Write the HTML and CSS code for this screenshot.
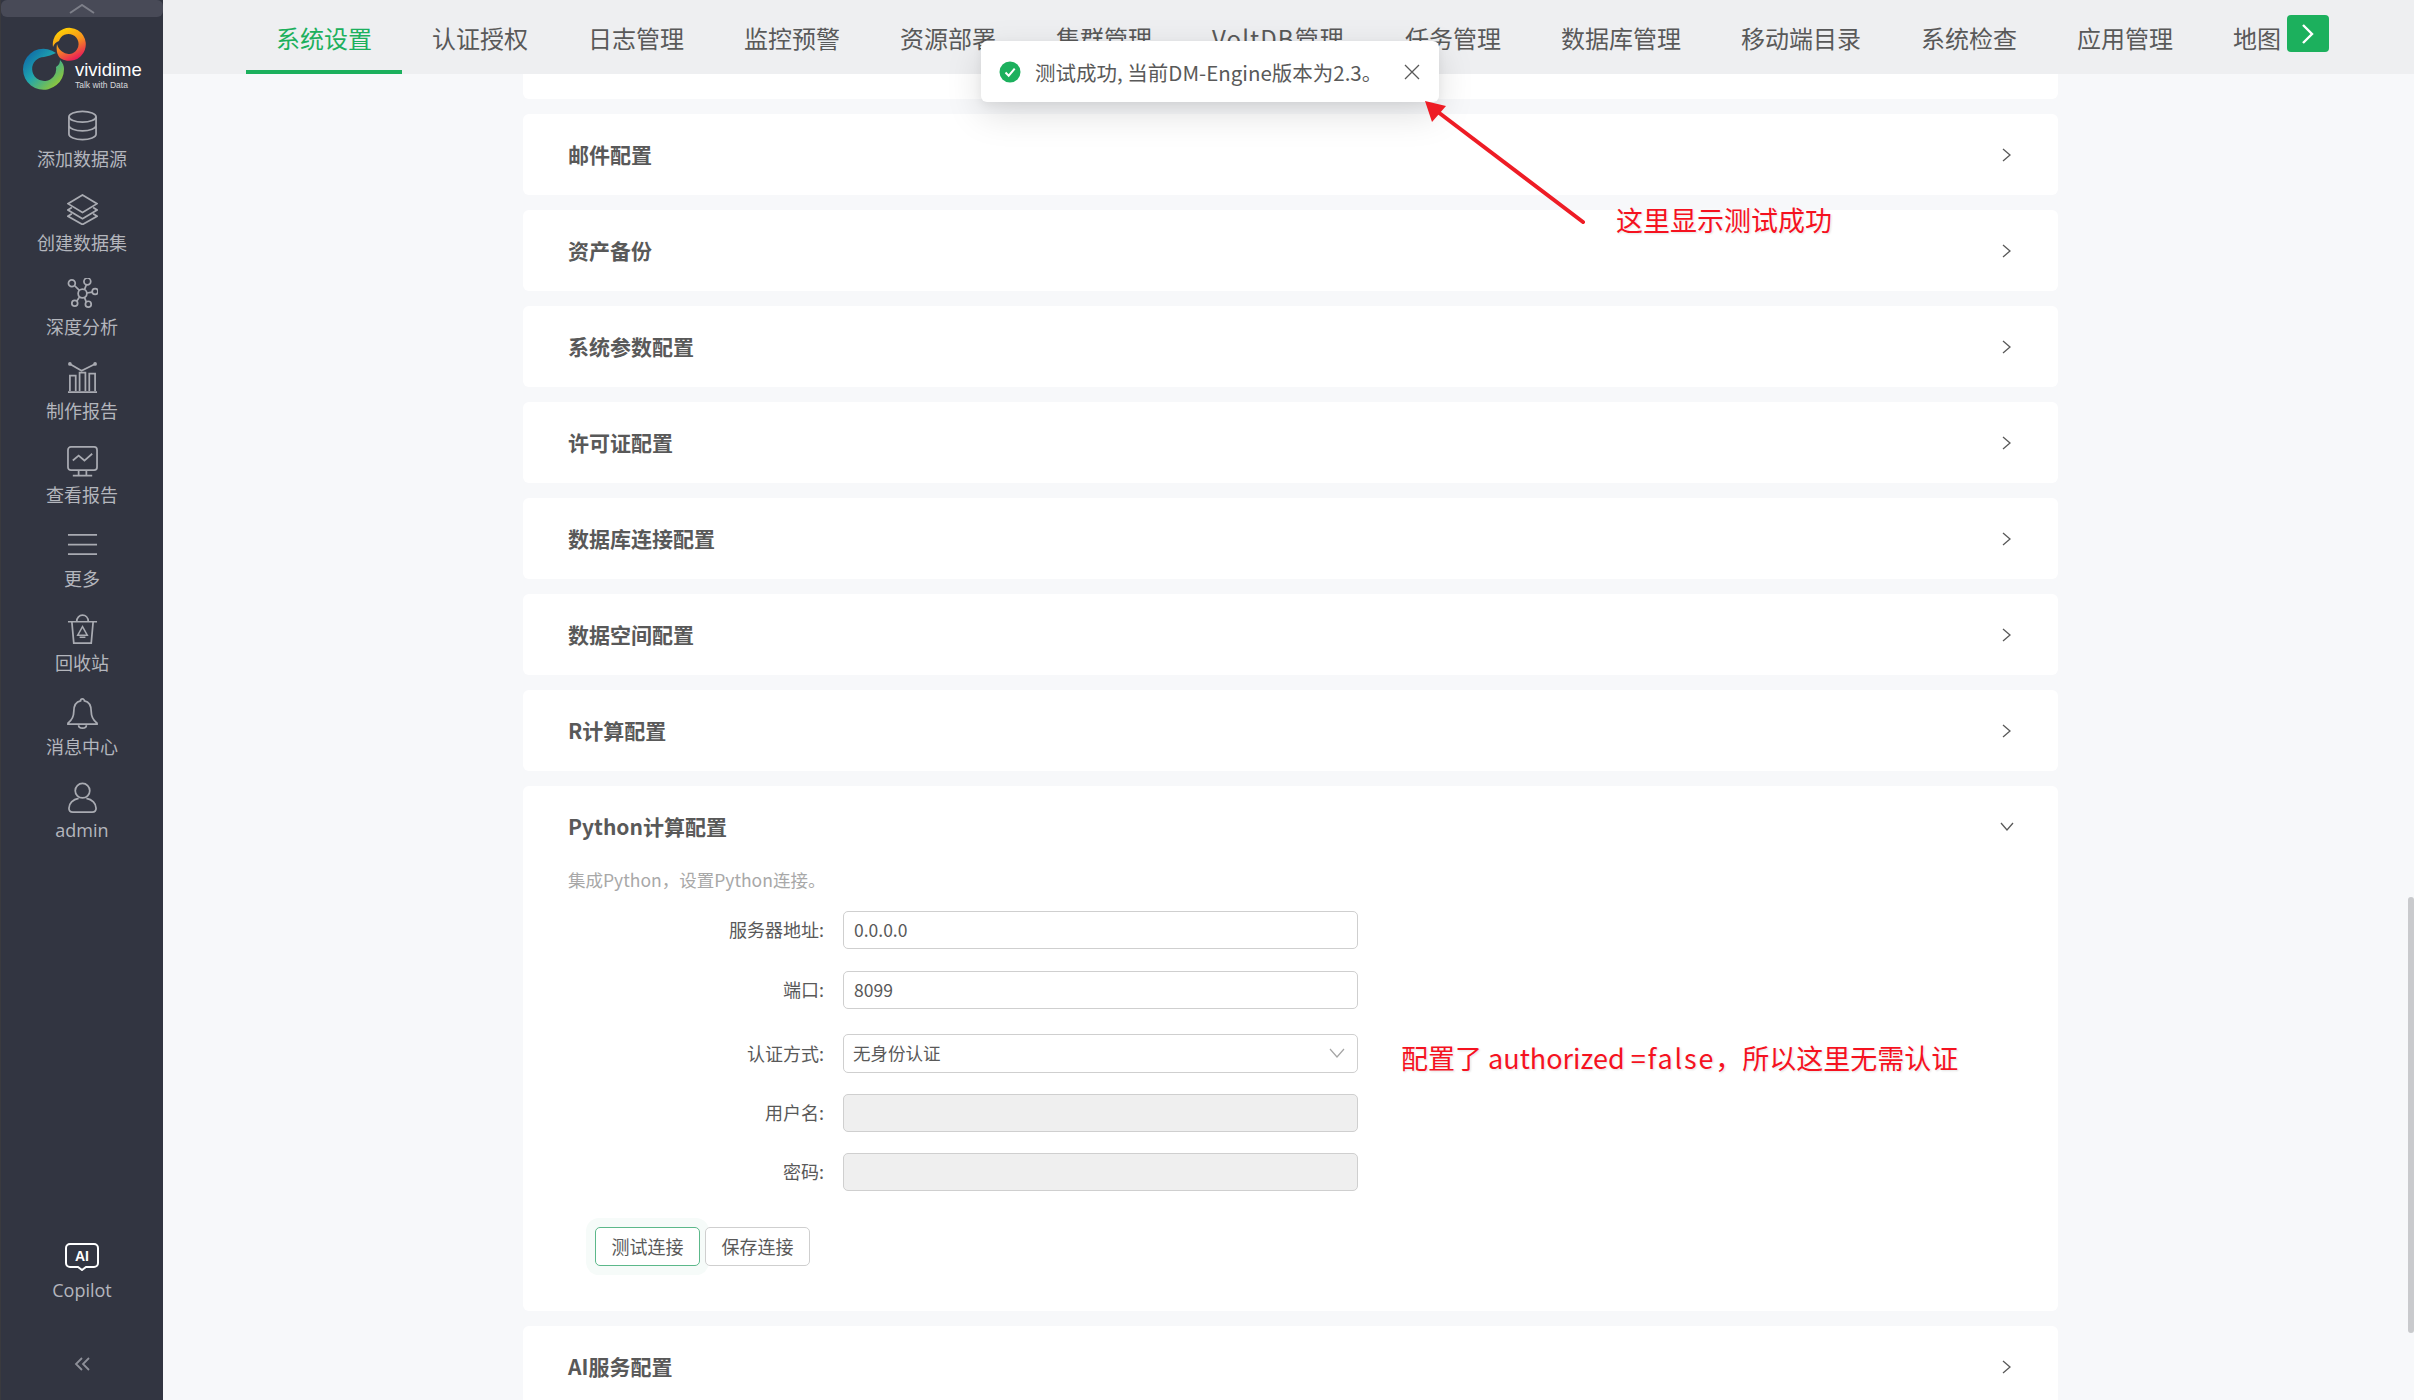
FILE: index.html
```html
<!DOCTYPE html>
<html lang="zh-CN">
<head>
<meta charset="utf-8">
<title>系统设置</title>
<link rel="stylesheet" href="styles.css">
</head>
<body>
<div class="app">
  <aside class="sidebar">
    <div class="collapse-top"><svg width="26" height="10" viewBox="0 0 26 10"><path d="M1 9 13 1 25 9" fill="none" stroke="#7d7f89" stroke-width="2"/></svg></div>
    <div class="logo">
      <svg class="logo-mark" width="70" height="68" viewBox="20 24 70 68">
        <defs>
          <linearGradient id="gBig" x1="0" y1="0" x2="1" y2="1"><stop offset="0" stop-color="#0b5aa6"/><stop offset=".45" stop-color="#1fa5ae"/><stop offset=".8" stop-color="#7fc24a"/><stop offset="1" stop-color="#b4d433"/></linearGradient>
          <linearGradient id="gSmall" x1=".2" y1="0" x2=".7" y2="1"><stop offset="0" stop-color="#ffd800"/><stop offset=".5" stop-color="#f7941d"/><stop offset="1" stop-color="#e6125d"/></linearGradient>
        </defs>
        <path d="M56 53A20.500 20.500 0 1 0 64 69C64 66 63 63 60 60C60 63 59 65 56 67A12 12 0 1 1 44 57C48 56 52 55 56 53Z" fill="url(#gBig)"/>
        <path d="M53 47A16.500 16.500 0 1 1 60 58C57 55 56 50 57 44C58 48 60 50 62 51.600A10 10 0 1 0 59 41C56 42 54 44 53 47Z" fill="url(#gSmall)"/>
      </svg>
      <div class="logo-text"><span class="logo-name">vividime</span><span class="logo-tag">Talk with Data</span></div>
    </div>
    <nav class="side-nav">
      <a class="side-item"><svg class="side-icon" viewBox="0 0 32 32"><ellipse cx="16" cy="7" rx="14" ry="5.500"/><path d="M2 7v18c0 3 6.300 5.500 14 5.500S30 28 30 25V7M2 16c0 3 6.300 5.500 14 5.500S30 19 30 16"/></svg><span>添加数据源</span></a>
      <a class="side-item"><svg class="side-icon" viewBox="0 0 32 32"><path d="M16 1 31 10 16 19 1 10Z"/><path d="M5 14 1 16.500 16 25.500 31 16.500 27 14M5 20.500 1 23 16 31.500 31 23 27 20.500"/></svg><span>创建数据集</span></a>
      <a class="side-item"><svg class="side-icon" viewBox="0 0 32 32"><circle cx="16" cy="16" r="4.500"/><circle cx="5" cy="5.500" r="3.500"/><circle cx="21" cy="3.500" r="3.500"/><circle cx="29" cy="14" r="3"/><circle cx="22" cy="27" r="3"/><circle cx="8" cy="26" r="3"/><path d="M8 8l5 5M20 7l-2 5M26 14.500l-5.500 1M20 25l-2-5M10 24l3-4.500"/></svg><span>深度分析</span></a>
      <a class="side-item"><svg class="side-icon" viewBox="0 0 32 32"><path d="M1 31h30M3 30V14h6v16M13 30V11h6v19M23 30V12h6v18"/><path d="M3 2l12 7L29 2"/><circle cx="3" cy="2" r="1"/><circle cx="29" cy="2" r="1"/></svg><span>制作报告</span></a>
      <a class="side-item"><svg class="side-icon" viewBox="0 0 32 32"><rect x="1" y="1" width="30" height="24" rx="3"/><path d="M6 15l6-5 6 5 8-7M12 25v5M20 25v5M6 30.500h20"/></svg><span>查看报告</span></a>
      <a class="side-item"><svg class="side-icon" viewBox="0 0 32 32"><path d="M1 5h30M1 15h30M1 25h30"/></svg><span>更多</span></a>
      <a class="side-item"><svg class="side-icon" viewBox="0 0 32 32"><path d="M1 8h30M5 8l2 22h18l2-22M10 8c0-9 12-9 12 0"/><path d="M16 13l-5 9h10zM13 24h6" stroke-width="1.500"/></svg><span>回收站</span></a>
      <a class="side-item"><svg class="side-icon" viewBox="0 0 32 32"><path d="M16 1c-1 0-2 1-2 2-5 1-7 6-7 11 0 5-2 9-6 12v1h30v-1c-4-3-6-7-6-12 0-5-2-10-7-11 0-1-1-2-2-2Z"/><path d="M12 28c0 4 8 4 8 0"/></svg><span>消息中心</span></a>
      <a class="side-item"><svg class="side-icon" viewBox="0 0 32 32"><circle cx="16" cy="9" r="7.500"/><path d="M12 17C6 18 2 22 2 27c0 2 1 4 4 4h20c3 0 4-2 4-4 0-5-4-9-10-10"/></svg><span class="latin">admin</span></a>
    </nav>
    <div class="side-bottom">
      <a class="side-item copilot"><svg class="ai-icon" width="34" height="28" viewBox="0 0 34 28"><path d="M5 1h24a4 4 0 0 1 4 4v15a4 4 0 0 1-4 4h-8l-4 3-4-3H5a4 4 0 0 1-4-4V5a4 4 0 0 1 4-4Z" fill="none" stroke="#fff" stroke-width="2"/><text x="17" y="18" text-anchor="middle" class="ai-text">AI</text></svg><span class="latin">Copilot</span></a>
      <div class="collapse-bottom"><svg width="16" height="14" viewBox="0 0 16 14"><path d="M8 1 2 7l6 6M15 1 9 7l6 6" fill="none" stroke="#8e9099" stroke-width="1.800"/></svg></div>
    </div>
  </aside>

  <main class="main">
    <header class="topbar">
      <a class="tab active">系统设置</a>
      <a class="tab">认证授权</a>
      <a class="tab">日志管理</a>
      <a class="tab">监控预警</a>
      <a class="tab">资源部署</a>
      <a class="tab">集群管理</a>
      <a class="tab tab-wide">VoltDB管理</a>
      <a class="tab">任务管理</a>
      <a class="tab">数据库管理</a>
      <a class="tab">移动端目录</a>
      <a class="tab">系统检查</a>
      <a class="tab">应用管理</a>
      <a class="tab">地图</a>
      <button class="tab-next"><svg width="14" height="22" viewBox="0 0 14 22"><path d="M2 2l9 9-9 9" fill="none" stroke="#fff" stroke-width="2.400"/></svg></button>
    </header>
    <section class="content">
      <div class="card stub"></div>
      <div class="card"><div class="card-head"><h3>邮件配置</h3><svg class="chev" viewBox="0 0 10 14"><path d="M1 1l7 6-7 6"/></svg></div></div>
      <div class="card"><div class="card-head"><h3>资产备份</h3><svg class="chev" viewBox="0 0 10 14"><path d="M1 1l7 6-7 6"/></svg></div></div>
      <div class="card"><div class="card-head"><h3>系统参数配置</h3><svg class="chev" viewBox="0 0 10 14"><path d="M1 1l7 6-7 6"/></svg></div></div>
      <div class="card"><div class="card-head"><h3>许可证配置</h3><svg class="chev" viewBox="0 0 10 14"><path d="M1 1l7 6-7 6"/></svg></div></div>
      <div class="card"><div class="card-head"><h3>数据库连接配置</h3><svg class="chev" viewBox="0 0 10 14"><path d="M1 1l7 6-7 6"/></svg></div></div>
      <div class="card"><div class="card-head"><h3>数据空间配置</h3><svg class="chev" viewBox="0 0 10 14"><path d="M1 1l7 6-7 6"/></svg></div></div>
      <div class="card"><div class="card-head"><h3>R计算配置</h3><svg class="chev" viewBox="0 0 10 14"><path d="M1 1l7 6-7 6"/></svg></div></div>
      <div class="card open">
        <div class="card-head"><h3>Python计算配置</h3><svg class="chev down" viewBox="0 0 14 10"><path d="M1 1l6 7 6-7"/></svg></div>
        <p class="desc">集成Python，设置Python连接。</p>
        <form class="form">
          <div class="row"><label>服务器地址:</label><div class="input">0.0.0.0</div></div>
          <div class="row"><label>端口:</label><div class="input">8099</div></div>
          <div class="row tall"><label>认证方式:</label><div class="input select">无身份认证<svg class="sel-arrow" viewBox="0 0 16 10"><path d="M1 1l7 8 7-8"/></svg></div></div>
          <div class="row near"><label>用户名:</label><div class="input disabled"></div></div>
          <div class="row near"><label>密码:</label><div class="input disabled"></div></div>
          <div class="buttons"><button type="button" class="btn focus">测试连接</button><button type="button" class="btn">保存连接</button></div>
        </form>
      </div>
      <div class="card"><div class="card-head"><h3>AI服务配置</h3><svg class="chev" viewBox="0 0 10 14"><path d="M1 1l7 6-7 6"/></svg></div></div>
    </section>
    <div class="scrollbar"></div>
  </main>

  <div class="toast">
    <svg class="toast-ok" width="22" height="22" viewBox="0 0 22 22"><circle cx="11" cy="11" r="10.500" fill="#1cb05d"/><path d="M6.500 11.500l3.200 3.200 6-7" fill="none" stroke="#fff" stroke-width="2"/></svg>
    <span class="toast-text">测试成功, 当前DM-Engine版本为2.3。</span>
    <svg class="toast-x" width="16" height="16" viewBox="0 0 16 16"><path d="M1 1l14 14M15 1 1 15" stroke="#595959" stroke-width="1.300"/></svg>
  </div>
  <svg class="arrow" width="180" height="140" viewBox="0 0 180 140"><path d="M158 121 9 8" stroke="#ee1c25" stroke-width="4" stroke-linecap="round" fill="none"/><path d="M0 0 21 5 7 21Z" fill="#ee1c25"/></svg>
  <div class="note note-a">这里显示测试成功</div>
  <div class="note note-b">配置了 authorized <span class="note-wide">=false</span>，所以这里无需认证</div>
</div>
</body>
</html>
```

FILE: styles.css
```css
* { box-sizing: border-box; }
html, body { margin: 0; height: 100%; overflow: hidden; }
body { font-family: "Noto Sans CJK SC", "Noto Sans", sans-serif; color: #595959; }
.app { display: flex; width: 100%; height: 100vh; position: relative; background: #f7f8fa; }

.sidebar { width: 163px; flex: none; height: 100%; background: #323541; display: flex; flex-direction: column; border-left: 1px solid #3a3a3e; }
.collapse-top { height: 17px; background: #484a57; border-radius: 6px; display: flex; justify-content: center; align-items: flex-start; padding-top: 4px; flex: none; }
.logo { height: 83px; flex: none; display: flex; padding: 7px 0 0 19px; }
.logo-mark { flex: none; }
.logo-text { display: flex; flex-direction: column; margin: 36px 0 0 -15px; }
.logo-name { font-family: "Liberation Sans", sans-serif; font-size: 18.500px; line-height: 20px; color: #fff; }
.logo-tag { font-family: "Liberation Sans", sans-serif; font-size: 8.500px; line-height: 10px; color: #d8d9dd; }

.side-nav { display: flex; flex-direction: column; }
.side-item { height: 84px; display: flex; flex-direction: column; align-items: center; padding-top: 10px; font-size: 18px; line-height: 26px; color: #b4b6bd; }
.side-icon { width: 31px; height: 31px; fill: none; stroke: #a9abb2; stroke-width: 1.800; margin-bottom: 4px; flex: none; }
.latin { font-family: "Open Sans", sans-serif; font-size: 18px; }
.side-bottom { margin-top: auto; display: flex; flex-direction: column; align-items: center; }
.side-item.copilot { height: 100px; padding-top: 0; }
.ai-icon { margin-bottom: 6px; flex: none; }
.ai-text { font-family: "Liberation Sans", sans-serif; font-weight: 700; font-size: 14px; fill: #fff; }
.collapse-bottom { height: 57px; padding-top: 9px; }

.main { flex: 1; min-width: 0; display: flex; flex-direction: column; position: relative; }
.topbar { height: 74px; flex: none; background: #eeeff1; display: flex; padding-left: 83px; position: relative; overflow: hidden; }
.tab { height: 74px; padding: 14px 30px 0; font-size: 24px; line-height: 48px; color: #595959; white-space: nowrap; flex: none; border-bottom: 4px solid transparent; }
.tab-wide { letter-spacing: 1.100px; }
.tab.active { color: #1cb05d; border-bottom-color: #1cb05d; }
.tab-next { position: absolute; left: 2124px; top: 15px; width: 42px; height: 37px; border: 0; padding: 0; border-radius: 4px; background: #1cb05d; display: flex; align-items: center; justify-content: center; }

.content { flex: 1; min-height: 0; overflow: hidden; padding-left: 360px; }
.card { width: 1535px; background: #fff; border-radius: 6px; margin-bottom: 15px; }
.stub { height: 25px; border-radius: 0 0 6px 6px; }
.card-head { height: 81px; padding: 0 45px; display: flex; align-items: center; justify-content: space-between; }
.card-head h3 { margin: 0 0 2px; font-size: 21px; font-weight: 700; line-height: 30px; color: #595959; }
.chev { width: 10px; height: 14px; fill: none; stroke: #595959; stroke-width: 1.300; flex: none; position: relative; left: -1px; }
.chev.down { width: 14px; height: 10px; left: 1px; }
.open { height: 525px; }
.desc { margin: 0; padding-left: 45px; font-size: 17.500px; line-height: 26px; color: #a8a8a8; }
.form { display: flex; flex-direction: column; padding-top: 18px; }
.row { display: flex; align-items: center; height: 38px; margin-bottom: 22px; }
.row.tall { height: 39px; margin-top: 3px; margin-bottom: 21px; }
.row.near { margin-bottom: 21px; }
.row label { width: 301px; margin: 0 19px 2px 0; text-align: right; font-size: 18px; line-height: 26px; color: #595959; }
.input { width: 515px; height: 100%; border: 1px solid #cfcfcf; border-radius: 5px; padding: 0 10px; font-size: 17.500px; line-height: 36px; color: #595959; background: #fff; position: relative; }
.select { padding-left: 9px; }
.sel-arrow { position: absolute; right: 12px; top: 13px; width: 16px; height: 10px; fill: none; stroke: #a5a5a5; stroke-width: 1.200; }
.disabled { background: #efefef; }
.buttons { display: flex; gap: 5px; padding: 15px 0 0 72px; }
.btn { width: 105px; height: 39px; border: 1px solid #cfcfcf; border-radius: 5px; background: #fff; font: inherit; font-size: 18px; line-height: 26px; color: #595959; padding: 0 0 2px; }
.btn.focus { border-color: #5cb88a; box-shadow: 0 0 0 9px #f6fbf9; }
.btn.focus + .btn { position: relative; }

.scrollbar { position: absolute; right: 0; top: 897px; width: 6px; height: 436px; background: #c9cacd; border-radius: 3px; }

.toast { position: absolute; left: 981px; top: 41px; width: 458px; height: 61px; background: #fff; border-radius: 6px; box-shadow: 0 12px 36px rgba(0,0,0,.13), 0 3px 10px rgba(0,0,0,.06); display: flex; align-items: center; padding-left: 18px; }
.toast-ok { flex: none; }
.toast-text { margin-left: 14px; font-size: 20.500px; line-height: 28px; color: #595959; white-space: nowrap; width: 369px; flex: none; }
.toast-x { flex: none; }
.arrow { position: absolute; left: 1425px; top: 101px; }
.note { position: absolute; font-size: 27px; line-height: 38px; color: #f5121f; white-space: nowrap; text-shadow: 0 0 3px #fff, 1px 1px 2px rgba(0,0,0,.15); }
.note-wide { letter-spacing: 1.800px; }
.note-a { left: 1616px; top: 201px; }
.note-b { left: 1401px; top: 1039px; }
```
